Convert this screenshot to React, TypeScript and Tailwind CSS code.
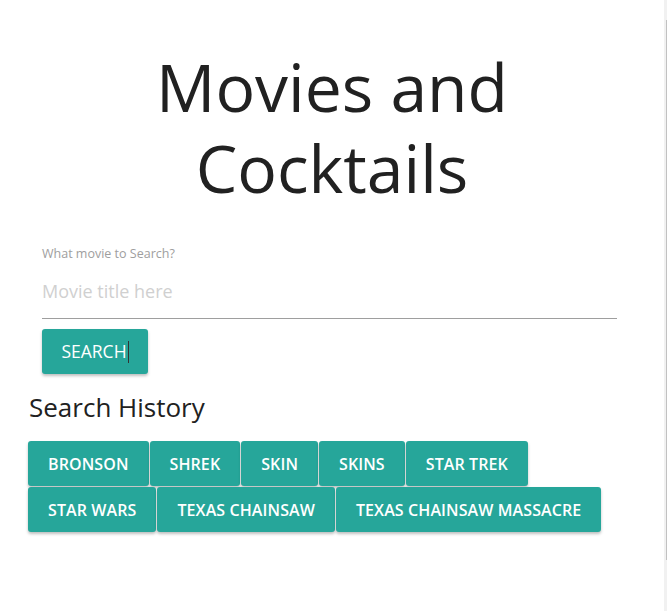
import React from "react";

const history = [
  "BRONSON",
  "SHREK",
  "SKIN",
  "SKINS",
  "STAR TREK",
  "STAR WARS",
  "TEXAS CHAINSAW",
  "TEXAS CHAINSAW MASSACRE",
];

export default function App() {
  return (
    <div
      className="flex w-[667px] h-[611px] bg-white overflow-hidden"
      style={{ fontFamily: '"Open Sans", "Noto Sans", sans-serif' }}
    >
      <main className="w-[664px] flex flex-col">
        <h1 className="mt-[46px] text-center text-[66px] leading-[81px] text-[#212121] font-normal">
          Movies and
          <br />
          Cocktails
        </h1>
        <form className="ml-[42px] w-[575px] mt-[38px] flex flex-col">
          <label className="text-[12.5px] leading-[16px] text-[#9e9e9e]">What movie to Search?</label>
          <input
            className="mt-[9px] h-[48px] border-b border-[#9e9e9e] outline-none text-[18px] placeholder:text-[#d0d0d0] pb-[8px]"
            placeholder="Movie title here"
          />
          <div className="mt-[10px]">
            <button
              type="button"
              className="w-[106px] h-[45px] rounded-[3px] bg-[#26a69a] text-white text-[17.5px] shadow-[0_2px_3px_rgba(0,0,0,0.25)] flex items-center justify-center"
            >
              SEARCH<span className="inline-block w-px h-[22px] bg-[#333] ml-px" />
            </button>
          </div>
        </form>
        <h2 className="ml-[29px] mt-[16px] text-[26px] leading-[34px] text-[#212121] font-normal">
          Search History
        </h2>
        <div className="ml-[28px] w-[608px] mt-[17px] flex flex-wrap gap-px">
          {history.map((h) => (
            <button
              key={h}
              type="button"
              className="h-[45px] px-[20px] rounded-[3px] bg-[#26a69a] text-white text-[16px] font-semibold tracking-[0.1px] shadow-[0_2px_3px_rgba(0,0,0,0.25)]"
            >
              {h}
            </button>
          ))}
        </div>
      </main>
      <div className="w-[3px] bg-[#f1f1f1] relative">
        <div className="absolute left-[2px] top-[20px] w-px h-[540px] bg-[#c1c1c1]" />
      </div>
    </div>
  );
}
